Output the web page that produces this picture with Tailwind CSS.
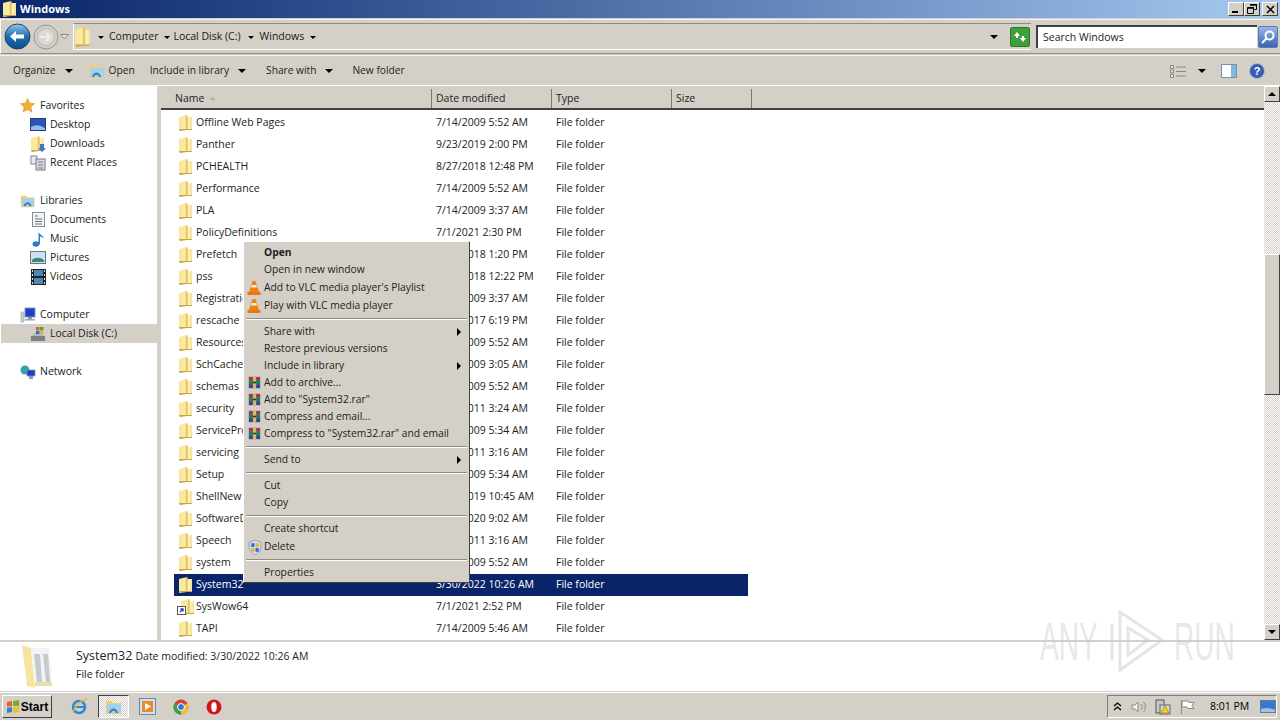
<!doctype html>
<html><head><meta charset="utf-8"><title>Windows</title>
<script src="https://cdn.jsdelivr.net/npm/@tailwindcss/browser@4"></script></head>
<body class="w-[1280px] h-[720px] overflow-hidden bg-[#d4d0c8] font-['Open_Sans','Noto_Sans',sans-serif] text-[10.5px] text-[#1a1a1a] whitespace-nowrap">
<svg class="absolute w-0 h-0"><defs>
<linearGradient id="fg" x1="0" y1="0" x2="1" y2="0"><stop offset="0" stop-color="#f8e698"/><stop offset=".45" stop-color="#fbeba4"/><stop offset=".62" stop-color="#dfbc58"/><stop offset=".72" stop-color="#fdf2bc"/><stop offset="1" stop-color="#f6e294"/></linearGradient>
<symbol id="f" viewBox="0 0 13 16"><path d="M0 2 L8 0 L9 2 H13 V14 H9 L0 16Z" fill="url(#fg)"/><path d="M0 14 L9 14 H13 V15 H8 L1 16Z" fill="#c4a850"/></symbol>
<symbol id="vlc" viewBox="0 0 16 16"><path d="M6.500 1h3l3.500 11H3Z" fill="#f08010"/><path d="M5.700 5h4.600l.7 2.400H5Z" fill="#f5f0e0"/><path d="M1.500 12h13v3h-13Z" fill="#e87810"/></symbol>
<symbol id="rar" viewBox="0 0 16 16"><path d="M1 1h14v4H1Z" fill="#a83060"/><path d="M1 5h14v5H1Z" fill="#208050"/><path d="M1 10h14v5H1Z" fill="#304890"/><path d="M6 1h4v14H6Z" fill="#d8b868"/><path d="M6 7h4v2H6Z" fill="#333"/></symbol>
<symbol id="lib" viewBox="0 0 18 18"><path d="M1 3h6l1 2h8v11H1Z" fill="#e8cf78"/><path d="M2 6h14v9H2Z" fill="#a8d0e8"/><path d="M4 15c1-6 8-6 9 0h-2c-1-3-4-3-5 0Z" fill="#3a80c0"/></symbol>
</defs></svg>

<div class="flex flex-col h-[720px]">
<!-- title bar -->
<div class="h-[18px] flex items-center bg-gradient-to-r from-[#0a246a] to-[#a6caf0] pl-[3px] pr-[2px] shrink-0">
  <svg class="w-[13px] h-4"><use href="#f"/></svg>
  <span class="ml-[4px] text-white font-bold text-[11px]">Windows</span>
  <div class="ml-auto flex gap-0">
    <div class="w-4 h-[14px] bg-[#d4d0c8] border border-t-white border-l-white border-b-[#404040] border-r-[#404040] relative"><div class="absolute left-[3px] bottom-[2px] w-[6px] h-[2px] bg-black"></div></div>
    <div class="w-4 h-[14px] bg-[#d4d0c8] border border-t-white border-l-white border-b-[#404040] border-r-[#404040] flex items-center justify-center"><svg width="10" height="10" viewBox="0 0 10 10" fill="none" stroke="#000"><path d="M3.500 .5h6v5h-2M.5 3.500h6v6h-6z"/><path d="M3 1h6.500M1 4h5.500" stroke-width="1.500"/></svg></div>
    <div class="ml-[2px] w-4 h-[14px] bg-[#d4d0c8] border border-t-white border-l-white border-b-[#404040] border-r-[#404040] flex items-center justify-center"><svg width="9" height="9" viewBox="0 0 9 9" stroke="#000" stroke-width="1.500"><path d="M1 1l7 7M8 1l-7 7"/></svg></div>
  </div>
</div>
<!-- address bar -->
<div class="h-[35px] mt-[1px] flex items-center border-t border-b border-t-[#f5f3ef] border-b-[#8f8c86] border-l border-l-white shrink-0 pl-[3px] pr-[2px]">
  <svg width="27" height="27" viewBox="0 0 27 27"><defs><linearGradient id="bk" x1="0" y1="0" x2="0" y2="1"><stop offset="0" stop-color="#8fc8ec"/><stop offset=".5" stop-color="#1f6fb0"/><stop offset="1" stop-color="#0d4a8a"/></linearGradient></defs><circle cx="13.500" cy="13.500" r="12.500" fill="url(#bk)" stroke="#1c3f68"/><path d="M6 13.500l6-5.500v3.500h8v4h-8V19Z" fill="#fff"/></svg>
  <svg class="ml-[2px]" width="26" height="26" viewBox="0 0 26 26"><circle cx="13" cy="13" r="12" fill="#d0cec8" stroke="#98968f"/><circle cx="13" cy="13" r="8.500" fill="#dcdad4" stroke="#bdbbb4"/><path d="M7 13h10M13 9l4 4-4 4" stroke="#efeeea" stroke-width="2" fill="none"/></svg>
  <svg class="ml-[1px]" width="9" height="6" viewBox="0 0 9 6"><path d="M.5.500h8L4.500 5Z" fill="#e4e2dc" stroke="#8c8a84"/></svg>
  <div class="ml-[4px] h-[27px] w-[958px] flex items-center border-l border-t border-b border-l-white border-t-[#8f8c86] border-b-white">
    <svg class="ml-[1px] w-[15px] h-[20px]" viewBox="0 0 13 16" preserveAspectRatio="none"><use href="#f"/></svg>
    <span class="ml-[8px] w-0 h-0 border-x-[3px] border-x-transparent border-t-[3px] border-t-black mt-[1px]"></span>
    <span class="ml-[5px] text-[#222]">Computer</span>
    <span class="ml-[6px] w-0 h-0 border-x-[3px] border-x-transparent border-t-[3px] border-t-black mt-[1px]"></span>
    <span class="ml-[3px]">Local Disk (C:)</span>
    <span class="ml-[7px] w-0 h-0 border-x-[3px] border-x-transparent border-t-[3px] border-t-black mt-[1px]"></span>
    <span class="ml-[6px]">Windows</span>
    <span class="ml-[6px] w-0 h-0 border-x-[3px] border-x-transparent border-t-[3px] border-t-black mt-[1px]"></span>
    <span class="ml-auto mr-[12px] w-0 h-0 border-x-[4px] border-x-transparent border-t-[4px] border-t-black"></span>
    <div class="mr-[1px] w-[20px] h-[20px] bg-[#3f9f3f] border border-[#2a7a2a] rounded-[2px] flex items-center justify-center"><svg width="14" height="12" viewBox="0 0 14 12" fill="#fff"><path d="M1 5l3-4 3 4H5v2H3V5ZM13 7l-3 4-3-4h2V5h2v2Z"/></svg></div>
  </div>
  <div class="ml-[5px] h-[23px] w-[221px] bg-white border-t-2 border-l-2 border-t-[#404040] border-l-[#404040] flex items-center pl-[5px] text-[#222]">Search Windows</div>
  <div class="ml-[1px] w-[20px] h-[22px] bg-gradient-to-b from-[#9ab8e8] to-[#3a62b0] border border-[#5a7ab8] rounded-[2px] flex items-center justify-center"><svg width="16" height="16" viewBox="0 0 16 16" fill="none" stroke="#fff" stroke-width="2"><circle cx="9.500" cy="6.500" r="4"/><path d="M6.500 9.500 2 14"/></svg></div>
</div>
<!-- command bar -->
<div class="h-[30px] mt-[1px] flex items-center border-t border-t-[#f5f3ef] pl-[13px] pr-[15px] shrink-0 text-[#222] text-[10.2px]">
  <span>Organize</span><span class="ml-[9px] w-0 h-0 border-x-[4px] border-x-transparent border-t-[4px] border-t-black"></span>
  <svg class="ml-[15px]" width="18" height="18"><use href="#lib"/></svg>
  <span class="ml-[3px]">Open</span>
  <span class="ml-[15px]">Include in library</span><span class="ml-[9px] w-0 h-0 border-x-[4px] border-x-transparent border-t-[4px] border-t-black"></span>
  <span class="ml-[20px]">Share with</span><span class="ml-[9px] w-0 h-0 border-x-[4px] border-x-transparent border-t-[4px] border-t-black"></span>
  <span class="ml-[19px]">New folder</span>
  <svg class="ml-auto" width="16" height="14" viewBox="0 0 16 14" fill="none" stroke="#8a8a80"><path d="M.5 1.500h3v3h-3zM.5 6h3v3h-3zM.5 10.500h3v3h-3z" fill="#e8e8e0"/><path d="M6 3h10M6 7.500h10M6 12h10"/></svg>
  <span class="ml-[12px] w-0 h-0 border-x-[4px] border-x-transparent border-t-[4px] border-t-black"></span>
  <svg class="ml-[15px]" width="16" height="14" viewBox="0 0 16 14"><rect x=".5" y=".5" width="15" height="13" fill="#fff" stroke="#6f93b0"/><rect x="10" y="1" width="5" height="12" fill="#80b8dc"/></svg>
  <svg class="ml-[12px]" width="16" height="16" viewBox="0 0 16 16"><circle cx="8" cy="8" r="7.500" fill="#3a5cb0" stroke="#a8b8d8"/><text x="8" y="12" font-size="11" font-weight="700" text-anchor="middle" fill="#fff" font-family="Liberation Sans">?</text></svg>
</div>
<!-- main -->
<div class="h-[555px] flex bg-white relative shrink-0 border-t border-t-white">
  <!-- nav -->
  <div class="w-[157px] shrink-0 pt-[10px] text-[#222] flex flex-col">
    <div class="h-[19px] flex items-center pl-[20px] gap-[5px]"><svg width="15" height="15" viewBox="0 0 16 16"><path d="M8 .5l2.300 5 5.200.6-3.900 3.500 1.100 5.400L8 12.200l-4.700 2.800 1.100-5.400L.5 6.100l5.200-.6Z" fill="#f0b030" stroke="#d88820" stroke-width=".6"/></svg>Favorites</div>
    <div class="h-[19px] flex items-center pl-[30px] gap-[4px]"><svg width="16" height="14" viewBox="0 0 16 14"><rect x=".5" y=".5" width="15" height="12" fill="#2a56b8" stroke="#28406c"/><path d="M1 9c5-3 9-2 14 1v2H1Z" fill="#9ab8e8"/></svg>Desktop</div>
    <div class="h-[19px] flex items-center pl-[31px] gap-[3px]"><svg width="16" height="16" viewBox="0 0 16 16"><svg width="13" height="16"><use href="#f"/></svg><path d="M9 8h4v4h2l-4 4-4-4h2Z" fill="#3a78c8"/></svg>Downloads</div>
    <div class="h-[19px] flex items-center pl-[30px] gap-[4px]"><svg width="16" height="16" viewBox="0 0 16 16"><rect x="1" y="1" width="6" height="8" fill="#e8e8e8" stroke="#889"/><rect x="6" y="4" width="9" height="11" fill="#d8dce0" stroke="#778"/><path d="M8 7h5M8 10h5M8 13h5" stroke="#778"/></svg>Recent Places</div>
    <div class="h-[19px] mt-[19px] flex items-center pl-[20px] gap-[4px]"><svg width="16" height="16"><use href="#lib"/></svg>Libraries</div>
    <div class="h-[19px] flex items-center pl-[32px] gap-[5px]"><svg width="13" height="15" viewBox="0 0 13 15"><rect x=".5" y=".5" width="12" height="14" fill="#f4f4f4" stroke="#8090a0"/><path d="M3 4h3M3 7h7M3 9.500h7M3 12h7" stroke="#607080"/></svg>Documents</div>
    <div class="h-[19px] flex items-center pl-[32px] gap-[5px]"><svg width="13" height="16" viewBox="0 0 13 16"><ellipse cx="4" cy="13" rx="3.500" ry="2.800" fill="#2c7cc8"/><path d="M6.500 13V1c1 3 5 3 5.500 7-1-2-3-2-4-2.500V13Z" fill="#2c7cc8"/></svg>Music</div>
    <div class="h-[19px] flex items-center pl-[30px] gap-[4px]"><svg width="16" height="13" viewBox="0 0 16 13"><rect x=".5" y=".5" width="15" height="12" fill="#cfe0f0" stroke="#607890"/><path d="M2 9c3-3 8-3 12 0v2H2Z" fill="#3a8870"/></svg>Pictures</div>
    <div class="h-[19px] flex items-center pl-[31px] gap-[4px]"><svg width="15" height="16" viewBox="0 0 15 16"><rect width="15" height="16" fill="#222"/><rect x="3" y="1" width="9" height="6" fill="#4a88b8"/><rect x="3" y="9" width="9" height="6" fill="#4a88b8"/><path d="M1 1h1v2H1ZM1 5h1v2H1ZM1 9h1v2H1ZM1 13h1v2H1ZM13 1h1v2h-1ZM13 5h1v2h-1ZM13 9h1v2h-1ZM13 13h1v2h-1Z" fill="#ddd"/></svg>Videos</div>
    <div class="h-[19px] mt-[19px] flex items-center pl-[20px] gap-[4px]"><svg width="16" height="16" viewBox="0 0 16 16"><rect x="5" y="1" width="10" height="9" fill="#1a3fc8" stroke="#8898b0"/><rect x="8" y="10" width="4" height="2" fill="#8898b0"/><rect x="5" y="12" width="10" height="1.500" fill="#a0a8b0"/><rect x="1" y="5" width="3" height="10" fill="#c8ccd0" stroke="#8898a0" stroke-width=".5"/></svg>Computer</div>
    <div class="h-[19px] flex items-center pl-[30px] gap-[4px] bg-[#d4d0c8] ml-[1px] -mr-[1px]"><svg class="-ml-[1px]" width="16" height="16" viewBox="0 0 16 16"><path d="M1 10h14v5H1Z" fill="#788088"/><path d="M2 10l2-3h8l2 3Z" fill="#b0b8c0"/><path d="M6 1h3.500v3.500H6Z" fill="#e06030"/><path d="M10 1h3.500v3.500H10Z" fill="#60a030"/><path d="M6 5h3.500v3H6Z" fill="#3070d0"/><path d="M10 5h3.500v3H10Z" fill="#e8b820"/></svg>Local Disk (C:)</div>
    <div class="h-[19px] mt-[19px] flex items-center pl-[20px] gap-[4px]"><svg width="16" height="16" viewBox="0 0 16 16"><circle cx="5" cy="6" r="4.500" fill="#3aa0a8"/><rect x="7" y="6" width="8" height="6" fill="#1a3fc8" stroke="#8898b0" stroke-width=".7"/><rect x="9" y="12" width="4" height="3" fill="#8898b0"/></svg>Network</div>
  </div>
  <div class="w-[4px] bg-[#d4d0c8] shrink-0"></div>
  <!-- list -->
  <div class="flex-1 flex flex-col min-w-0 overflow-hidden">
    <div class="h-[24px] pt-[3px] flex bg-[#d4d0c8] border-b-2 border-b-[#404040] shrink-0 text-[#222]">
      <div class="w-[271px] border-r border-r-[#7a7872] pl-[14px] flex items-center">Name<svg class="ml-[6px]" width="5" height="3" viewBox="0 0 5 3"><path d="M2.500 0 5 3H0Z" fill="#a8a6a0"/></svg></div>
      <div class="w-[120px] border-r border-r-[#7a7872] pl-[4px] flex items-center">Date modified</div>
      <div class="w-[120px] border-r border-r-[#7a7872] pl-[4px] flex items-center">Type</div>
      <div class="w-[80px] border-r border-r-[#7a7872] pl-[4px] flex items-center">Size</div>
    </div>
    <div class="pl-[13px] pt-[2px] text-[#222]">
      <div class="h-[22px] w-[574px] flex items-center"><svg class="w-[13px] h-4 ml-[5px] mr-[4px] shrink-0"><use href="#f"/></svg><span class="w-[240px]">Offline Web Pages</span><span class="w-[120px]">7/14/2009 5:52 AM</span><span>File folder</span></div>
      <div class="h-[22px] w-[574px] flex items-center"><svg class="w-[13px] h-4 ml-[5px] mr-[4px] shrink-0"><use href="#f"/></svg><span class="w-[240px]">Panther</span><span class="w-[120px]">9/23/2019 2:00 PM</span><span>File folder</span></div>
      <div class="h-[22px] w-[574px] flex items-center"><svg class="w-[13px] h-4 ml-[5px] mr-[4px] shrink-0"><use href="#f"/></svg><span class="w-[240px]">PCHEALTH</span><span class="w-[120px]">8/27/2018 12:48 PM</span><span>File folder</span></div>
      <div class="h-[22px] w-[574px] flex items-center"><svg class="w-[13px] h-4 ml-[5px] mr-[4px] shrink-0"><use href="#f"/></svg><span class="w-[240px]">Performance</span><span class="w-[120px]">7/14/2009 5:52 AM</span><span>File folder</span></div>
      <div class="h-[22px] w-[574px] flex items-center"><svg class="w-[13px] h-4 ml-[5px] mr-[4px] shrink-0"><use href="#f"/></svg><span class="w-[240px]">PLA</span><span class="w-[120px]">7/14/2009 3:37 AM</span><span>File folder</span></div>
      <div class="h-[22px] w-[574px] flex items-center"><svg class="w-[13px] h-4 ml-[5px] mr-[4px] shrink-0"><use href="#f"/></svg><span class="w-[240px]">PolicyDefinitions</span><span class="w-[120px]">7/1/2021 2:30 PM</span><span>File folder</span></div>
      <div class="h-[22px] w-[574px] flex items-center"><svg class="w-[13px] h-4 ml-[5px] mr-[4px] shrink-0"><use href="#f"/></svg><span class="w-[240px]">Prefetch</span><span class="w-[120px]">3/30/2018 1:20 PM</span><span>File folder</span></div>
      <div class="h-[22px] w-[574px] flex items-center"><svg class="w-[13px] h-4 ml-[5px] mr-[4px] shrink-0"><use href="#f"/></svg><span class="w-[240px]">pss</span><span class="w-[120px]">3/30/2018 12:22 PM</span><span>File folder</span></div>
      <div class="h-[22px] w-[574px] flex items-center"><svg class="w-[13px] h-4 ml-[5px] mr-[4px] shrink-0"><use href="#f"/></svg><span class="w-[240px]">Registration</span><span class="w-[120px]">7/14/2009 3:37 AM</span><span>File folder</span></div>
      <div class="h-[22px] w-[574px] flex items-center"><svg class="w-[13px] h-4 ml-[5px] mr-[4px] shrink-0"><use href="#f"/></svg><span class="w-[240px]">rescache</span><span class="w-[120px]">8/14/2017 6:19 PM</span><span>File folder</span></div>
      <div class="h-[22px] w-[574px] flex items-center"><svg class="w-[13px] h-4 ml-[5px] mr-[4px] shrink-0"><use href="#f"/></svg><span class="w-[240px]">Resources</span><span class="w-[120px]">7/14/2009 5:52 AM</span><span>File folder</span></div>
      <div class="h-[22px] w-[574px] flex items-center"><svg class="w-[13px] h-4 ml-[5px] mr-[4px] shrink-0"><use href="#f"/></svg><span class="w-[240px]">SchCache</span><span class="w-[120px]">7/14/2009 3:05 AM</span><span>File folder</span></div>
      <div class="h-[22px] w-[574px] flex items-center"><svg class="w-[13px] h-4 ml-[5px] mr-[4px] shrink-0"><use href="#f"/></svg><span class="w-[240px]">schemas</span><span class="w-[120px]">7/14/2009 5:52 AM</span><span>File folder</span></div>
      <div class="h-[22px] w-[574px] flex items-center"><svg class="w-[13px] h-4 ml-[5px] mr-[4px] shrink-0"><use href="#f"/></svg><span class="w-[240px]">security</span><span class="w-[120px]">4/12/2011 3:24 AM</span><span>File folder</span></div>
      <div class="h-[22px] w-[574px] flex items-center"><svg class="w-[13px] h-4 ml-[5px] mr-[4px] shrink-0"><use href="#f"/></svg><span class="w-[240px]">ServiceProfiles</span><span class="w-[120px]">7/14/2009 5:34 AM</span><span>File folder</span></div>
      <div class="h-[22px] w-[574px] flex items-center"><svg class="w-[13px] h-4 ml-[5px] mr-[4px] shrink-0"><use href="#f"/></svg><span class="w-[240px]">servicing</span><span class="w-[120px]">4/12/2011 3:16 AM</span><span>File folder</span></div>
      <div class="h-[22px] w-[574px] flex items-center"><svg class="w-[13px] h-4 ml-[5px] mr-[4px] shrink-0"><use href="#f"/></svg><span class="w-[240px]">Setup</span><span class="w-[120px]">7/14/2009 5:34 AM</span><span>File folder</span></div>
      <div class="h-[22px] w-[574px] flex items-center"><svg class="w-[13px] h-4 ml-[5px] mr-[4px] shrink-0"><use href="#f"/></svg><span class="w-[240px]">ShellNew</span><span class="w-[120px]">9/23/2019 10:45 AM</span><span>File folder</span></div>
      <div class="h-[22px] w-[574px] flex items-center"><svg class="w-[13px] h-4 ml-[5px] mr-[4px] shrink-0"><use href="#f"/></svg><span class="w-[240px]">SoftwareDistribution</span><span class="w-[120px]">1/30/2020 9:02 AM</span><span>File folder</span></div>
      <div class="h-[22px] w-[574px] flex items-center"><svg class="w-[13px] h-4 ml-[5px] mr-[4px] shrink-0"><use href="#f"/></svg><span class="w-[240px]">Speech</span><span class="w-[120px]">4/12/2011 3:16 AM</span><span>File folder</span></div>
      <div class="h-[22px] w-[574px] flex items-center"><svg class="w-[13px] h-4 ml-[5px] mr-[4px] shrink-0"><use href="#f"/></svg><span class="w-[240px]">system</span><span class="w-[120px]">7/14/2009 5:52 AM</span><span>File folder</span></div>
      <div class="h-[22px] w-[574px] flex items-center bg-[#0a246a] text-white"><svg class="w-[13px] h-4 ml-[5px] mr-[4px] shrink-0"><use href="#f"/></svg><span class="w-[240px]">System32</span><span class="w-[120px]">3/30/2022 10:26 AM</span><span>File folder</span></div>
      <div class="h-[22px] w-[574px] flex items-center"><svg class="w-[18px] h-4 ml-[3px] mr-[1px] shrink-0" viewBox="0 0 18 16"><svg x="4" width="13" height="16"><use href="#f"/></svg><rect x=".5" y="7.500" width="8" height="8" fill="#fff" stroke="#555"/><path d="M3 13l3-3M3.500 10H6v2.500" fill="none" stroke="#1a3fc8" stroke-width="1.300"/></svg><span class="w-[240px]">SysWow64</span><span class="w-[120px]">7/1/2021 2:52 PM</span><span>File folder</span></div>
      <div class="h-[22px] w-[574px] flex items-center"><svg class="w-[13px] h-4 ml-[5px] mr-[4px] shrink-0"><use href="#f"/></svg><span class="w-[240px]">TAPI</span><span class="w-[120px]">7/14/2009 5:46 AM</span><span>File folder</span></div>
    </div>
  </div>
  <!-- scrollbar -->
  <div class="w-[16px] shrink-0 flex flex-col bg-[repeating-conic-gradient(#d4d0c8_0_25%,#fff_0_50%)] bg-[length:2px_2px]">
    <div class="h-[16px] bg-[#d4d0c8] border border-t-white border-l-white border-b-[#404040] border-r-[#404040] flex items-center justify-center"><span class="w-0 h-0 border-x-[4px] border-x-transparent border-b-[4px] border-b-black"></span></div>
    <div class="h-[141px] mt-[152px] bg-[#d4d0c8] border border-t-white border-l-white border-b-[#404040] border-r-[#404040]"></div>
    <div class="mt-auto h-[16px] bg-[#d4d0c8] border border-t-white border-l-white border-b-[#404040] border-r-[#404040] flex items-center justify-center"><span class="w-0 h-0 border-x-[4px] border-x-transparent border-t-[4px] border-t-black"></span></div>
  </div>

  <!-- context menu -->
  <div class="absolute left-[243px] top-[155px] w-[227px] h-[342px] bg-[#d4d0c8] border border-t-white border-l-white border-b-[#404040] border-r-[#404040] text-[#222] text-[10.3px] pt-[2px] pl-[2px] pr-[2px] z-10">
    <div class="h-[17px] pl-[18px] flex items-center font-bold">Open</div>
    <div class="h-[17px] pl-[18px] flex items-center">Open in new window</div>
    <div class="h-[18px] mt-[1px] flex items-center"><svg class="w-[16px] h-[16px] mr-[2px]"><use href="#vlc"/></svg>Add to VLC media player's Playlist</div>
    <div class="h-[18px] flex items-center"><svg class="w-[16px] h-[16px] mr-[2px]"><use href="#vlc"/></svg>Play with VLC media player</div>
    <div class="h-[8px] flex items-center"><div class="w-full h-[2px] border-t border-t-[#8f8c86] border-b border-b-white"></div></div>
    <div class="h-[17px] pl-[18px] pr-[6px] flex items-center justify-between">Share with<span class="w-0 h-0 border-y-[4px] border-y-transparent border-l-[4px] border-l-black"></span></div>
    <div class="h-[17px] pl-[18px] flex items-center">Restore previous versions</div>
    <div class="h-[17px] pl-[18px] pr-[6px] flex items-center justify-between">Include in library<span class="w-0 h-0 border-y-[4px] border-y-transparent border-l-[4px] border-l-black"></span></div>
    <div class="h-[17px] flex items-center"><svg class="w-[13px] h-[13px] ml-[2px] mr-[3px]"><use href="#rar"/></svg>Add to archive...</div>
    <div class="h-[17px] flex items-center"><svg class="w-[13px] h-[13px] ml-[2px] mr-[3px]"><use href="#rar"/></svg>Add to "System32.rar"</div>
    <div class="h-[17px] flex items-center"><svg class="w-[13px] h-[13px] ml-[2px] mr-[3px]"><use href="#rar"/></svg>Compress and email...</div>
    <div class="h-[17px] flex items-center"><svg class="w-[13px] h-[13px] ml-[2px] mr-[3px]"><use href="#rar"/></svg>Compress to "System32.rar" and email</div>
    <div class="h-[9px] flex items-center"><div class="w-full h-[2px] border-t border-t-[#8f8c86] border-b border-b-white"></div></div>
    <div class="h-[17px] pl-[18px] pr-[6px] flex items-center justify-between">Send to<span class="w-0 h-0 border-y-[4px] border-y-transparent border-l-[4px] border-l-black"></span></div>
    <div class="h-[9px] flex items-center"><div class="w-full h-[2px] border-t border-t-[#8f8c86] border-b border-b-white"></div></div>
    <div class="h-[17px] pl-[18px] flex items-center">Cut</div>
    <div class="h-[17px] pl-[18px] flex items-center">Copy</div>
    <div class="h-[9px] flex items-center"><div class="w-full h-[2px] border-t border-t-[#8f8c86] border-b border-b-white"></div></div>
    <div class="h-[17px] pl-[18px] flex items-center">Create shortcut</div>
    <div class="h-[18px] mt-[1px] flex items-center"><svg class="ml-[2px] mr-[2px]" width="14" height="15" viewBox="0 0 13 14"><path d="M1 2l5.500-2L12 2v5c0 3-2.500 5.500-5.500 7C3.500 12.500 1 10 1 7Z" fill="#d8d8e8" stroke="#8898c0" stroke-width=".8"/><path d="M3 3h3v3.500H3Z" fill="#3070d0"/><path d="M7 3h3v3.500H7Z" fill="#e8b820"/><path d="M3 7.500h3V11H3Z" fill="#e8b820"/><path d="M7 7.500h3V11H7Z" fill="#3070d0"/></svg>Delete</div>
    <div class="h-[8px] flex items-center"><div class="w-full h-[2px] border-t border-t-[#8f8c86] border-b border-b-white"></div></div>
    <div class="h-[17px] pl-[18px] flex items-center">Properties</div>
  </div>
</div>
<!-- divider -->
<div class="h-[2px] bg-[#d4d0c8] shrink-0"></div>
<!-- details -->
<div class="h-[50px] bg-white flex shrink-0 border-b border-b-[#d4d0c8]">
  <svg class="ml-[21px] mt-[2px]" width="32" height="46" viewBox="0 0 32 46"><path d="M1 1 L10 4 L14 44 L6 42Z" fill="#f8e4a0"/><path d="M10 4 H28 L31 38 H14Z" fill="#f2f3f2"/><path d="M13 10h6l2 28h-5ZM22 10h5l2 28h-4Z" fill="#c4cad0"/><path d="M14 38h17v4H14Z" fill="#eadcae"/></svg>
  <div class="ml-[23px] pt-[5px]">
    <div class="h-[18px] flex items-baseline"><span class="text-[12.5px] text-[#222]">System32</span><span class="ml-[3px] text-[#222]">Date modified: 3/30/2022 10:26 AM</span></div>
    <div class="mt-[2px] text-[#222]">File folder</div>
  </div>
</div>
<!-- taskbar -->
<div class="flex-1 flex items-center border-t border-t-white pl-[2px] pr-[3px]">
  <div class="h-[23px] w-[50px] flex items-center justify-center gap-[1px] border border-t-white border-l-white border-b-[#404040] border-r-[#404040] font-bold text-[12px] text-black font-['Liberation_Sans',sans-serif]"><svg width="14" height="14" viewBox="0 0 14 14"><path d="M1 2 6 1v5L1 7Z" fill="#e8602c"/><path d="M7 1l6-1v6L7 6Z" fill="#70b030"/><path d="M1 8l5-1v5l-5 1Z" fill="#3080d8"/><path d="M7 7h6v5l-6 1Z" fill="#f0c020"/></svg>Start</div>
  <svg class="ml-[19px]" width="17" height="17" viewBox="0 0 17 17" fill="none"><circle cx="8" cy="9" r="6" stroke="#2a8adc" stroke-width="2.500"/><path d="M3 9h11" stroke="#2a8adc" stroke-width="2"/><path d="M2 14C5 6 11 2 16 1" stroke="#e8b830" stroke-width="1.300"/></svg>
  <div class="ml-[10px] w-[31px] h-[23px] bg-[repeating-conic-gradient(#d4d0c8_0_25%,#fff_0_50%)] bg-[length:2px_2px] border border-t-[#404040] border-l-[#404040] border-b-white border-r-white flex items-center justify-center"><svg width="18" height="18"><use href="#lib"/></svg></div>
  <svg class="ml-[10px]" width="17" height="17" viewBox="0 0 17 17"><rect x=".5" y=".5" width="16" height="16" fill="#cfe0f0" stroke="#5a8ac0"/><rect x="3" y="3" width="11" height="11" fill="#f08a20"/><path d="M6 5l6 3.500L6 12Z" fill="#fff"/></svg>
  <svg class="ml-[17px]" width="16" height="16" viewBox="0 0 16 16"><circle cx="8" cy="8" r="7.500" fill="#d84030"/><path d="M8 8 14.500 4.200A7.500 7.500 0 0 1 8 15.500Z" fill="#f0c030"/><path d="M8 8 8 15.500A7.500 7.500 0 0 1 1.500 4.200Z" fill="#3aa050"/><circle cx="8" cy="8" r="3.500" fill="#3a78d8" stroke="#fff"/></svg>
  <svg class="ml-[17px]" width="16" height="16" viewBox="0 0 16 16"><circle cx="8" cy="8" r="7.500" fill="#d01818"/><ellipse cx="8" cy="8" rx="2.700" ry="5" fill="#fff"/></svg>
  <div class="ml-auto h-[23px] w-[170px] flex items-center border border-t-[#808080] border-l-[#808080] border-b-white border-r-white pl-[5px] text-[#222]">
    <svg class="shrink-0" width="9" height="9" viewBox="0 0 9 9" fill="none" stroke="#000" stroke-width="1.300"><path d="M1 4l3.500-3L8 4M1 8l3.500-3L8 8"/></svg>
    <svg class="ml-[9px] shrink-0" width="16" height="14" viewBox="0 0 16 14" fill="none" stroke="#8a8a8a"><path d="M1 5h3l3-3v10L4 9H1Z" fill="#eee"/><path d="M10 4c1.500 2 1.500 4 0 6M12.500 2c2.500 3 2.500 7 0 10"/></svg>
    <svg class="ml-[8px] shrink-0" width="16" height="16" viewBox="0 0 16 16"><rect x="1" y="1" width="8" height="13" fill="#c8c8c8" stroke="#555"/><rect x="5" y="6" width="10" height="9" fill="#d8d8c8" stroke="#666"/><path d="M10 7l4 7H6Z" fill="#f8d020" stroke="#806000" stroke-width=".5"/></svg>
    <svg class="ml-[8px] shrink-0" width="16" height="16" viewBox="0 0 16 16" fill="#fff" stroke="#888"><path d="M2.500 1v14"/><path d="M3 2h6l1 1.500h5l-2 3 2 3H9L8 8H3Z"/></svg>
    <span class="ml-[15px] text-black">8:01 PM</span>
    <svg class="ml-[11px] shrink-0" width="16" height="14" viewBox="0 0 16 14"><rect x=".5" y=".5" width="15" height="12" fill="#3a78d0" stroke="#6a7a90"/><path d="M1 9c5-2 9-1 14 1v2H1Z" fill="#a0c0e8"/></svg>
  </div>
</div>
</div>
<!-- watermark -->
<div class="absolute left-[1040px] top-[610px] h-[62px] w-[196px] flex items-center text-[#cccccc]/45 font-['Liberation_Sans',sans-serif] text-[54px] leading-none pointer-events-none z-20">
  <span class="scale-x-[.52] origin-left w-[64px]">ANY</span>
  <svg class="ml-[4px] shrink-0" width="58" height="62" viewBox="0 0 58 62" fill="none" stroke="#cccccc" stroke-opacity=".5" stroke-width="3"><path d="M4 14v36M12 2l42 28-42 30ZM20 18l20 12-20 15Z"/></svg>
  <span class="scale-x-[.52] origin-left ml-[8px]">RUN</span>
</div>
</body></html>
